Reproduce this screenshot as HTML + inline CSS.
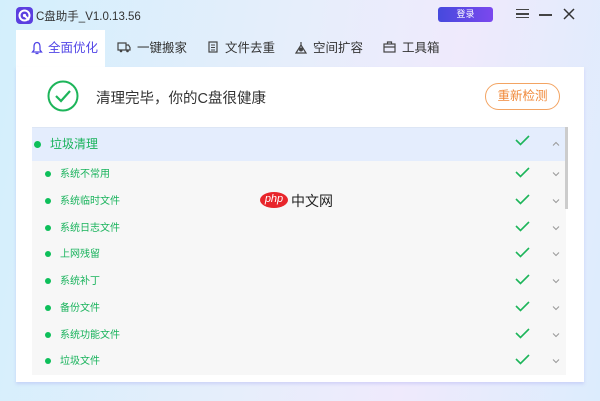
<!DOCTYPE html>
<html><head><meta charset="utf-8"><style>
*{margin:0;padding:0;box-sizing:border-box}
body{width:600px;height:401px;overflow:hidden;font-family:"Liberation Sans","Noto Sans CJK SC",sans-serif;background:linear-gradient(100deg,#d3effc 0%,#e6eefb 45%,#efeafc 70%,#dcecfd 100%);position:relative}
.a{position:absolute}
.tab{position:absolute;top:30px;height:37px;font-size:12.5px;color:#333;line-height:37px}
.panel{left:16px;top:67px;width:568px;height:315px;background:#fff;box-shadow:0 2px 3px rgba(160,160,240,.35)}
.dot{position:absolute;width:6px;height:6px;border-radius:50%;background:#0dbf5a}
.lbl{position:absolute;color:#19b35c;font-size:10px;line-height:12px}
</style></head><body>
<svg class="a" style="left:16px;top:7px" width="17" height="17" viewBox="0 0 17 17"><rect width="17" height="17" rx="4" fill="#5b3fe0"/><circle cx="8.5" cy="8.5" r="5" fill="none" stroke="#fff" stroke-width="2"/><circle cx="8.5" cy="8.5" r="1.6" fill="#fff"/><path d="M9 9l4 4" stroke="#fff" stroke-width="2"/></svg>
<div class="a" style="left:36px;top:8px;font-size:11.5px;color:#333">C盘助手_V1.0.13.56</div>
<div class="a" style="left:438px;top:7px;width:55px;height:15px;border-radius:3px;background:linear-gradient(90deg,#4649dd,#7b48ee);color:#fff;font-size:9px;text-align:center;line-height:15px">登录</div>
<div class="a" style="left:516px;top:9px;width:13px;height:9px;border-top:1.5px solid #444;border-bottom:1.5px solid #444"></div>
<div class="a" style="left:516px;top:13px;width:13px;height:1.5px;background:#444"></div>
<div class="a" style="left:539px;top:14px;width:13px;height:1.5px;background:#444"></div>
<svg class="a" style="left:563px;top:8px" width="12" height="12"><path d="M1 1l10 10M11 1L1 11" stroke="#333" stroke-width="1.5"/></svg>

<div class="a" style="left:16px;top:30px;width:89px;height:37px;background:#fff"></div>
<div class="tab" style="left:48px;color:#5145e6">全面优化</div>
<svg class="a" style="left:31px;top:41px" width="12" height="14" viewBox="0 0 12 14"><path d="M6 1.5C3.5 1.5 3 4 3 6v3L1.5 11h9L9 9V6C9 4 8.5 1.5 6 1.5zM4.5 12.5h3" fill="none" stroke="#5145e6" stroke-width="1.3"/></svg>
<div class="tab" style="left:137px">一键搬家</div>
<svg class="a" style="left:117px;top:42px" width="14" height="11"><path d="M1 1h8v7H1zM9 3h2.5L13 5.5V8H9" fill="none" stroke="#444" stroke-width="1.2"/><circle cx="4" cy="9" r="1.3" fill="#444"/><circle cx="10.5" cy="9" r="1.3" fill="#444"/></svg>
<div class="tab" style="left:225px">文件去重</div>
<svg class="a" style="left:208px;top:41px" width="11" height="13"><rect x="1" y="1" width="8" height="10" fill="none" stroke="#444" stroke-width="1.2"/><path d="M3 4h4M3 6.5h4M3 9h4" stroke="#444"/></svg>
<div class="tab" style="left:313px">空间扩容</div>
<svg class="a" style="left:294px;top:41px" width="14" height="13"><path d="M7 1v3M2 12l5-8 5 8z" fill="none" stroke="#444" stroke-width="1.2"/><circle cx="7" cy="8.5" r="2" fill="#444"/></svg>
<div class="tab" style="left:402px">工具箱</div>
<svg class="a" style="left:383px;top:41px" width="13" height="12"><rect x="1" y="3" width="11" height="8" fill="none" stroke="#444" stroke-width="1.2"/><path d="M4.5 3V1h4v2M1 6h11" fill="none" stroke="#444" stroke-width="1.2"/></svg>

<div class="a panel"></div>
<svg class="a" style="left:47px;top:80px" width="32" height="32"><circle cx="16" cy="16" r="14.5" fill="none" stroke="#1db55a" stroke-width="2"/><path d="M9 16l5 5 9-10" fill="none" stroke="#1db55a" stroke-width="2.2"/></svg>
<div class="a" style="left:96px;top:87px;font-size:14.5px;color:#333">清理完毕，你的C盘很健康</div>
<div class="a" style="left:485px;top:83px;width:75px;height:27px;border:1px solid #f3a463;border-radius:14px;color:#f0893a;font-size:12.5px;text-align:center;line-height:25px">重新检测</div>

<div class="a" style="left:32px;top:127px;width:534px;height:34px;background:#e4edfd;border-top:1px solid #dde6f5"></div>
<div class="a" style="left:32px;top:161px;width:534px;height:214px;background:#f7f7f7"></div>
<div class="dot" style="left:34px;top:141px;width:7px;height:7px"></div>
<div class="lbl" style="left:50px;top:137px;font-size:12px;line-height:14px">垃圾清理</div>
<svg class="a" style="left:515px;top:135px" width="15" height="11"><path d="M1 5l4.5 4.5L14 1" fill="none" stroke="#1db55a" stroke-width="1.6"/></svg>
<svg class="a" style="left:552px;top:141px" width="8" height="5"><path d="M1 4.5L4 1.5l3 3" fill="none" stroke="#999"/></svg>

<div id="rows"></div>
<script>
var n=["系统不常用","系统临时文件","系统日志文件","上网残留","系统补丁","备份文件","系统功能文件","垃圾文件"],h="";
for(var i=0;i<8;i++){var c=Math.round(174+i*26.75);
h+='<div class="dot" style="left:45px;top:'+(c-3)+'px"></div>';
h+='<div class="lbl" style="left:60px;top:'+(c-5)+'px">'+n[i]+'</div>';
h+='<svg class="a" style="left:515px;top:'+(c-7)+'px" width="15" height="11"><path d="M1 5l4.5 4.5L14 1" fill="none" stroke="#1db55a" stroke-width="1.6"/></svg>';
h+='<svg class="a" style="left:552px;top:'+(c-2)+'px" width="8" height="5"><path d="M1 0.5L4 3.5l3-3" fill="none" stroke="#999"/></svg>';}
document.getElementById("rows").innerHTML=h;
</script>
<div class="a" style="left:565px;top:127px;width:3px;height:82px;background:#ccc"></div>

<div class="a" style="left:260px;top:192px;width:28px;height:16px;border-radius:50%;background:#e8252b;color:#fff;font-size:11px;font-style:italic;text-align:center;line-height:15px">php</div>
<div class="a" style="left:291px;top:191px;font-size:14px;color:#222">中文网</div>
</body></html>
